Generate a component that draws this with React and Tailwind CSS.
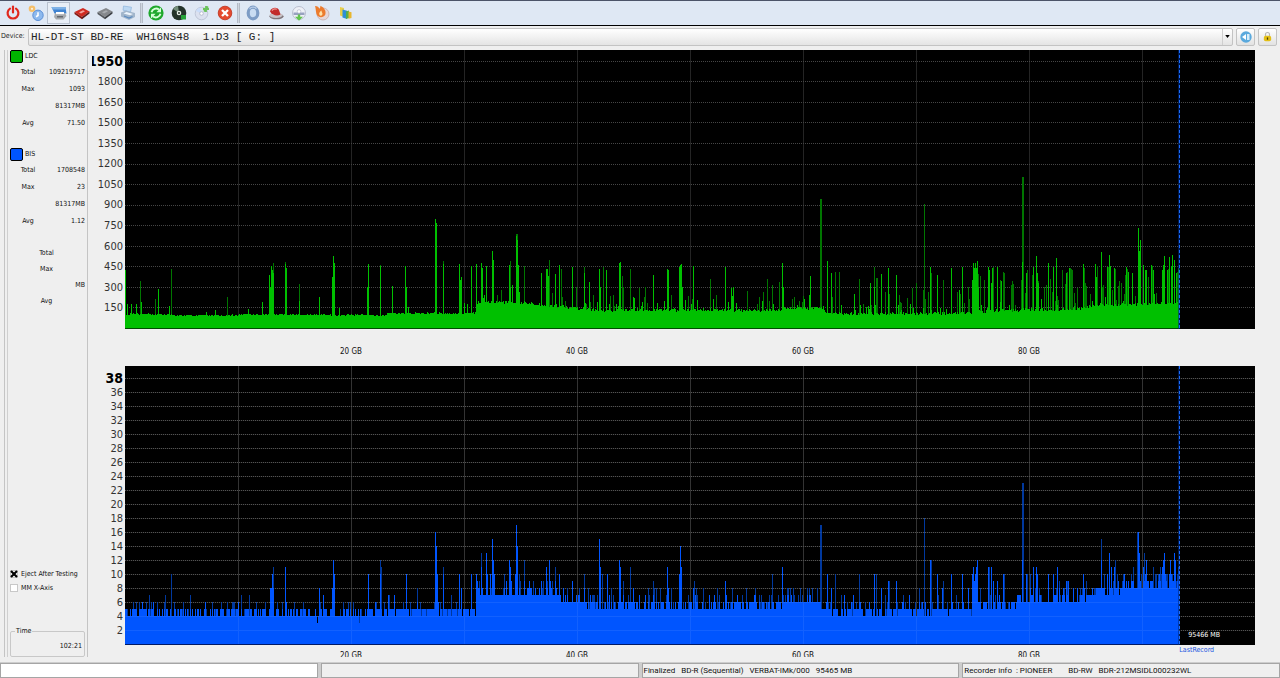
import React from 'react';

const PLOT_W = 1130;
const PLOT_H = 279;
const BASE_Y = 278;
const LAST_RECORD = 1054;

// [x, value] break points of the error floor
const LDC_FLOOR = [
  [0, 92], [6, 102], [44, 98], [50, 90], [110, 92], [120, 98], [260, 92], [262, 106], [350, 108],
  [352, 182], [400, 186], [415, 168], [440, 152], [455, 138], [480, 128], [600, 130], [618, 126], [655, 130],
  [662, 142], [698, 145], [702, 102], [800, 102], [840, 108], [870, 122], [900, 132], [930, 132],
  [955, 140], [970, 166], [1010, 168], [1054, 178],
];

const LDC_SPIKES = [
  [0, 424], [2, 173], [6, 173], [11, 173], [16, 190], [33, 282], [44, 160], [81, 120], [90, 131], [123, 139],
  [137, 192], [144, 387], [145, 300], [146, 453], [147, 420], [148, 400], [160, 470], [161, 440], [174, 200],
  [194, 224], [207, 375], [208, 528], [209, 472], [214, 144], [243, 465], [242, 300], [255, 455], [267, 309],
  [280, 453], [281, 300], [283, 150], [310, 796], [311, 764], [318, 470], [334, 467], [335, 350], [336, 375],
  [339, 180], [342, 175], [346, 455], [351, 467], [356, 477], [357, 440], [361, 453], [367, 565], [368, 500],
  [384, 460], [385, 300], [387, 314], [391, 670], [392, 640], [393, 460], [416, 399], [421, 431], [422, 430],
  [423, 380], [430, 394], [434, 460], [447, 448], [459, 400], [464, 333], [474, 431], [475, 300], [481, 423],
  [494, 472], [495, 480], [508, 229], [509, 220], [528, 387], [542, 431], [543, 420], [554, 448], [555, 460],
  [556, 465], [557, 300], [568, 453], [588, 212], [600, 443], [606, 290], [607, 230], [608, 300], [657, 477],
  [658, 300], [685, 380], [684, 240], [702, 492], [706, 399], [729, 248], [745, 326], [749, 300], [756, 394],
  [763, 436], [771, 387], [805, 448], [812, 387], [826, 436], [837, 443], [834, 277], [847, 350], [848, 472],
  [849, 440], [850, 477], [851, 440], [852, 492], [853, 300], [863, 448], [864, 420], [866, 330], [867, 440],
  [872, 448], [876, 340], [897, 485], [901, 400], [908, 448], [911, 528], [912, 400], [913, 330], [923, 472],
  [928, 448], [931, 509], [941, 400], [944, 436], [958, 467], [970, 467], [971, 375], [976, 557], [982, 448],
  [984, 533], [985, 450], [989, 440], [1001, 448], [1003, 410], [1007, 400], [1013, 728], [1014, 560],
  [1015, 643], [1018, 460], [1020, 423], [1021, 420], [1026, 460], [1028, 420], [1037, 423], [1038, 460],
  [1039, 528], [1042, 420], [1044, 516], [1046, 450], [1047, 533], [1049, 497], [1051, 400], [1053, 440],
];

const LDC_FAINT = [
  [15, 345], [30, 209], [46, 433], [102, 229], [174, 319], [148, 477], [160, 480], [255, 463], [318, 492],
  [376, 277], [385, 492], [391, 686], [392, 686], [399, 455], [424, 497], [436, 428], [451, 302], [459, 448],
  [468, 240], [478, 448], [488, 240], [497, 380], [498, 302], [505, 431], [514, 290], [520, 297], [546, 240],
  [585, 355], [634, 229], [638, 265], [642, 355], [647, 314], [654, 338], [695, 942], [696, 942], [710, 411],
  [714, 411], [734, 355], [749, 448], [751, 367], [752, 367], [760, 265], [774, 240], [782, 220], [787, 290],
  [791, 326], [799, 905], [798, 277], [806, 400], [818, 350], [843, 302], [855, 382], [868, 448], [875, 350],
  [878, 411], [879, 400], [886, 314], [897, 1100], [898, 1100], [902, 423], [907, 390], [919, 300], [937, 423],
  [942, 411], [945, 436], [947, 423], [946, 430], [959, 440], [972, 450], [983, 448], [990, 430], [996, 326],
  [1002, 430], [1027, 450], [1043, 430],
];

const BIS_FLOOR = [
  [0, 4], [352, 4], [353, 7.2], [434, 7.2], [435, 6.2], [459, 6.1], [460, 5.5], [600, 5.4], [652, 5.4],
  [653, 6], [695, 6], [699, 4.8], [740, 4.7], [815, 4.8], [850, 5.2], [888, 5.7], [900, 6.1], [955, 6.4],
  [968, 7.3], [990, 7.8], [1000, 8.2], [1054, 8.3],
];

const BIS_SPIKES = [
  [17, 6], [28, 6], [80, 6], [113, 6], [145, 8], [146, 8], [147, 10], [148, 8], [160, 11], [161, 6], [194, 8],
  [198, 7], [207, 8], [208, 12], [209, 10], [243, 10], [250, 6], [255, 10], [263, 7], [269, 7], [281, 10],
  [292, 6], [310, 16], [311, 14], [312, 10], [313, 6], [318, 10], [334, 10], [336, 8], [346, 10], [351, 10],
  [352, 9], [356, 11], [361, 13], [362, 10], [365, 10], [367, 15], [368, 12], [369, 10], [384, 12], [385, 11],
  [386, 9], [390, 10], [391, 17], [392, 14], [399, 9], [404, 9], [405, 8], [406, 8], [416, 9], [421, 11],
  [424, 12], [425, 9], [430, 9], [434, 10], [438, 8], [447, 9], [459, 8], [474, 15], [475, 11], [482, 10],
  [494, 12], [495, 11], [508, 8], [514, 7], [520, 7], [528, 7], [542, 11], [543, 8], [554, 10], [555, 14],
  [556, 11], [568, 8], [584, 7], [600, 9], [612, 7], [630, 7], [657, 11], [662, 7], [684, 7], [685, 7], [702, 10],
  [706, 8], [719, 7], [728, 7], [749, 10], [756, 8], [763, 9], [771, 9], [784, 7], [805, 12], [812, 10], [817, 8],
  [826, 10], [837, 10], [843, 8], [847, 10], [848, 11], [849, 9], [850, 10], [851, 11], [852, 12], [863, 11],
  [866, 11], [868, 9], [872, 9], [878, 10], [897, 12], [901, 10], [908, 11], [911, 11], [912, 10], [923, 10],
  [928, 10], [932, 11], [941, 9], [943, 9], [958, 10], [976, 12], [982, 10], [984, 13], [986, 11], [989, 11],
  [1001, 9], [1003, 9], [1007, 9], [1013, 16], [1014, 13], [1018, 11], [1020, 10], [1021, 12], [1027, 9],
  [1037, 11], [1038, 12], [1039, 13], [1040, 10], [1044, 10], [1045, 12], [1049, 13], [1050, 12], [1053, 11],
];

const BIS_FAINT = [
  [24, 7], [40, 7], [46, 10], [65, 7], [96, 6], [108, 6], [116, 7], [124, 7], [140, 6], [148, 11], [169, 6],
  [178, 6], [228, 6], [255, 12], [256, 11], [264, 7], [292, 8], [318, 11], [326, 7], [356, 13], [399, 12],
  [430, 11], [459, 10], [477, 10], [488, 7], [505, 11], [528, 9], [535, 8], [569, 9], [578, 8], [592, 8],
  [630, 8], [647, 10], [663, 8], [668, 8], [692, 8], [695, 17], [696, 17], [710, 10], [734, 10], [751, 10],
  [764, 9], [799, 18], [818, 9], [806, 12], [855, 8], [864, 11], [879, 10], [897, 23], [898, 23], [902, 10],
  [942, 9], [976, 15], [990, 12], [1012, 16], [1019, 13], [1028, 11], [1052, 10],
];

const LDC_TICKS = [1950, 1800, 1650, 1500, 1350, 1200, 1050, 900, 750, 600, 450, 300, 150];
const BIS_TICKS = [38, 36, 34, 32, 30, 28, 26, 24, 22, 20, 18, 16, 14, 12, 10, 8, 6, 4, 2];

function seeded(seed) {
  let s = seed;
  return () => {
    s = (s * 1664525 + 1013904223) % 4294967296;
    return s / 4294967296;
  };
}

function floorAt(points, x) {
  for (let i = 1; i < points.length; i++) {
    const [x1, v1] = points[i];
    if (x <= x1) {
      const [x0, v0] = points[i - 1];
      return v0 + ((v1 - v0) * (x - x0)) / (x1 - x0);
    }
  }
  return points[points.length - 1][1];
}

function buildLdc() {
  const rand = seeded(7);
  const solid = [];
  const faint = new Array(LAST_RECORD).fill(0);
  for (let x = 0; x < LAST_RECORD; x++) {
    let v = floorAt(LDC_FLOOR, x) + (rand() - 0.4) * (x > 350 ? 24 : 12);
    const r = rand();
    if (x > 350 && r < 0.1) v += rand() * 70;
    solid.push(v);
    if (x > 840 && rand() < 0.22) faint[x] = 180 + rand() * 230;
    else if (x > 350 && rand() < 0.09) faint[x] = 160 + rand() * 110;
  }
  LDC_SPIKES.forEach(([x, v]) => { solid[x] = Math.max(solid[x], v); });
  LDC_FAINT.forEach(([x, v]) => { faint[x] = v; });
  return { solid, faint };
}

function buildBis() {
  const rand = seeded(21);
  const solid = [];
  const faint = new Array(LAST_RECORD).fill(0);
  for (let x = 0; x < LAST_RECORD; x++) {
    const base = floorAt(BIS_FLOOR, x);
    let v = Math.floor(base + rand() * 0.99);
    if (x < 352) v = rand() < (x > 258 || (x > 8 && x < 20) ? 0.85 : 0.5) ? 5 : 4;
    else if (rand() < 0.12) v += 1;
    if (rand() < 0.012) v -= 1;
    solid.push(v);
    const r = rand();
    if (r < 0.14) faint[x] = v + 1;
    else if (x > 350 && r < 0.24) faint[x] = v + 2;
  }
  BIS_SPIKES.forEach(([x, v]) => { solid[x] = Math.max(solid[x], v); });
  BIS_FAINT.forEach(([x, v]) => { faint[x] = v; });
  return { solid, faint };
}

function toPath(values, scale) {
  return values
    .map((v, x) => (v > 0 ? `M${x} ${BASE_Y}V${Math.round(BASE_Y - v * scale)}h1V${BASE_Y}z` : ''))
    .join('');
}

const ldc = buildLdc();
const bis = buildBis();

function Plot({ data, scale, ticks, color, faintColor, edge, overlay }) {
  const lines = ticks.map((t) => Math.round(BASE_Y - t * scale) + 0.5);
  const columns = [1, 2, 3, 4, 5, 6, 7, 8, 9].map((n) => n * 113 + 0.5);
  const grid = lines.map((y) => `M0 ${y}H${PLOT_W}`).join('');
  const verticals = columns.map((x) => `M${x} 0V${PLOT_H}`).join('');
  return (
    <svg viewBox={`0 0 ${PLOT_W} ${PLOT_H}`} preserveAspectRatio="none" className="absolute inset-0 block h-full w-full bg-black" shapeRendering="crispEdges">
      <path d={verticals} stroke="#242424" />
      <path d={grid} stroke="#464646" strokeDasharray="1 1" />
      <path d={toPath(data.faint, scale)} fill={faintColor} />
      <path d={toPath(data.solid, scale)} fill={color} />
      {overlay && <path d={grid + verticals} stroke="#fff" strokeOpacity="0.07" />}
      <path d={`M0 ${PLOT_H - 0.5}H${LAST_RECORD}`} stroke={edge} />
      <path d={`M${LAST_RECORD} 0V${PLOT_H}`} stroke="#002a80" strokeWidth="2" strokeOpacity="0.6" />
      <path d={`M${LAST_RECORD + 0.5} 0V${PLOT_H}`} stroke="#1a6dff" strokeDasharray="3 2" />
    </svg>
  );
}

function YAxis({ ticks, className }) {
  return (
    <div className={`ml-1 flex w-[33px] shrink-0 flex-col overflow-hidden pr-0.5 ${className}`}>
      {ticks.map((t, i) => (
        <div key={t} className={`flex min-h-0 flex-1 items-center justify-end leading-none ${i === 0 ? 'text-[14px] font-bold text-black' : 'text-[11px] text-[#333]'}`}>
          {t}
        </div>
      ))}
    </div>
  );
}

function XAxis({ className }) {
  return (
    <div className={`ml-[37px] mr-[25px] grid shrink-0 grid-cols-10 overflow-hidden text-center text-[8px] leading-[10px] text-[#111] ${className}`}>
      <span />
      {[20, 40, 60, 80].map((gb) => (
        <span key={gb} className="col-span-2">{gb} GB</span>
      ))}
    </div>
  );
}

function Stat({ label, value }) {
  return (
    <div className="flex h-[17px] items-center">
      <span className="w-10 text-center">{label}</span>
      <span className="flex-1 text-right">{value}</span>
    </div>
  );
}

function StatGroup({ name, swatch, total, max, at, avg }) {
  return (
    <section>
      <h2 className="flex h-3 items-center gap-0.5 pl-0.5">
        <span className={`h-[13px] w-[13px] rounded-[2px] border border-black ${swatch}`} />
        {name}
      </h2>
      <div className="mt-0.5">
        <Stat label="Total" value={total} />
        <Stat label="Max" value={max} />
        <Stat label="" value={at} />
        <Stat label="Avg" value={avg} />
      </div>
    </section>
  );
}

function Check({ label, checked }) {
  return (
    <label className="flex h-[14px] items-center gap-[3px] pl-0.5">
      <span className="relative flex h-2 w-2">
        <input type="checkbox" defaultChecked={checked} className="peer h-2 w-2 appearance-none border border-[#c8c8c8] bg-white" />
        <svg viewBox="0 0 8 8" className="pointer-events-none absolute inset-0 hidden h-2 w-2 peer-checked:block">
          <path d="M1 1l6 6M7 1L1 7" stroke="#000" strokeWidth="2.2" />
        </svg>
      </span>
      {label}
    </label>
  );
}

const TOOLS = [
  {
    name: 'Exit',
    art: (
      <>
        <path d="M5 3.6a5.4 5.4 0 1 0 6 0" fill="none" stroke="#e0281e" strokeWidth="2.2" strokeLinecap="round" />
        <path d="M8 1.5v6" stroke="#e0281e" strokeWidth="2.2" strokeLinecap="round" />
      </>
    ),
  },
  {
    name: 'Settings',
    art: (
      <>
        <circle cx="4" cy="3.8" r="3.3" fill="#f5bf6a" />
        <circle cx="4" cy="3.8" r="1.1" fill="#fff3dc" />
        <circle cx="10" cy="10.3" r="5.2" fill="#8db9ee" stroke="#5b8fd6" />
        <path d="M10 7.2v3.3l-2 1.2" fill="none" stroke="#fff" strokeWidth="1.6" />
      </>
    ),
  },
  {
    name: 'Disc quality',
    pressed: true,
    art: (
      <>
        <path d="M.5 2h14l1 6.500h-12z" fill="#3f83d2" />
        <path d="M.5 2h14l.4 2.500H1.500z" fill="#7fb2e6" />
        <path d="M4 8h10l1.500 3-3 3.500H5l-2-2.500z" fill="#a5a9ae" />
        <path d="M5 7h8v2.200H5z" fill="#fff" />
        <path d="M6 11h6v1.500H6z" fill="#62676e" />
      </>
    ),
  },
  {
    name: 'Book red',
    art: (
      <>
        <path d="M.5 7L9 3l6.500 3.500-7.500 5.500z" fill="#cf2a20" />
        <path d="M.5 7L8 12v2.200L.5 9z" fill="#861610" />
        <path d="M8 12l7.500-5.500v2L8 14.200z" fill="#5a1b18" />
        <path d="M5 7.200l4-1.900 2 1-4 2.200z" fill="#f3a39c" />
      </>
    ),
  },
  {
    name: 'Book grey',
    art: (
      <>
        <path d="M.5 7L9 3l6.500 3.500-7.500 5.500z" fill="#85888c" />
        <path d="M.5 7L8 12v2.200L.5 9z" fill="#55585c" />
        <path d="M8 12l7.500-5.500v2L8 14.200z" fill="#3b3e42" />
        <path d="M5 7.200l4-1.900 2 1-4 2.200z" fill="#a9acb0" />
      </>
    ),
  },
  {
    name: 'Print',
    art: (
      <>
        <path d="M3.500 1l8 1.200-1 5-7.500-2z" fill="#bcd8f3" stroke="#83add6" strokeWidth=".6" />
        <path d="M1 7.500L6 5.500l9 2.500v4L9 15l-8-3.600z" fill="#a2b6cb" />
        <path d="M3.500 8.400l3-1.300 6.500 1.800-3 1.300z" fill="#edf5fd" />
        <path d="M4 11l5 2 3.500-1.500" fill="none" stroke="#5b8cc2" strokeWidth="1.3" />
      </>
    ),
  },
  {
    name: 'Refresh',
    split: true,
    art: (
      <>
        <circle cx="8" cy="8" r="7.6" fill="#1fa82c" />
        <path d="M3.5 7.2A4.8 4.8 0 0 1 11 4.5M12.5 8.8A4.8 4.8 0 0 1 5 11.5" fill="none" stroke="#d8ffd9" strokeWidth="1.9" />
        <path d="M13 2.5v4.8H8.4zM3 13.5V8.7h4.6z" fill="#d8ffd9" />
      </>
    ),
  },
  {
    name: 'Read disc',
    art: (
      <>
        <circle cx="8" cy="8" r="7.3" fill="#23332a" />
        <path d="M8 8L2 4a7.2 7.2 0 0 1 5-3.2z" fill="#738d7b" />
        <circle cx="8" cy="8" r="2.3" fill="#e4ece5" />
        <circle cx="8" cy="8" r="1" fill="#23332a" />
        <path d="M10 10h5v4.5h-5z" fill="#24a338" />
      </>
    ),
  },
  {
    name: 'Add disc',
    art: (
      <>
        <circle cx="7.5" cy="8.5" r="6.3" fill="#dbe1ef" stroke="#b7bfd0" strokeWidth=".8" />
        <path d="M7.5 8.5L2 6a6 6 0 0 1 4-3.4z" fill="#c9ddfb" />
        <circle cx="7.5" cy="8.5" r="1.8" fill="#fff" stroke="#a7afc0" strokeWidth=".7" />
        <path d="M12 1v6M9 4h6M10 6.5l4-5" stroke="#6bc35c" strokeWidth="1.8" />
      </>
    ),
  },
  {
    name: 'Stop',
    art: (
      <>
        <circle cx="8" cy="8" r="6.8" fill="#e4492e" stroke="#bd2e19" strokeWidth=".8" />
        <path d="M5 5l6 6M11 5l-6 6" stroke="#fff" strokeWidth="2.3" />
      </>
    ),
  },
  {
    name: 'Disc info',
    split: true,
    art: (
      <>
        <ellipse cx="8" cy="8" rx="4.8" ry="5.800" fill="#c9dcf2" stroke="#7d9cc5" strokeWidth="3.2" />
        <path d="M4.500 3.600a5.400 5.400 0 0 1 7 0" fill="none" stroke="#b9cde7" strokeWidth="1.4" />
      </>
    ),
  },
  {
    name: 'Burn',
    art: (
      <>
        <ellipse cx="8.5" cy="11.3" rx="7" ry="3" fill="#7e7479" />
        <ellipse cx="8" cy="10.3" rx="6.5" ry="2.6" fill="#c8c3c7" />
        <path d="M2 6.5C3 2.5 9 1.5 11 5l1.5 4.5C9 11.5 4 10 2 6.5z" fill="#c22b2a" />
        <path d="M4 5.6c1.3-1.8 3.2-2 4.8-1.3" fill="none" stroke="#f09c97" strokeWidth="1.2" />
      </>
    ),
  },
  {
    name: 'Save image',
    art: (
      <>
        <circle cx="8" cy="8" r="6.5" fill="#eef0f7" stroke="#b4b9c9" strokeWidth=".9" />
        <path d="M2.500 7.500h11v2.500h-11z" fill="#98a1c0" />
        <circle cx="8" cy="6.5" r="1.8" fill="#fff" stroke="#a9b0c4" strokeWidth=".6" />
        <path d="M6.8 9.500h2.4v2.300H12L8 15.8l-4-4h2.8z" fill="#63c44e" />
      </>
    ),
  },
  {
    name: 'Erase',
    art: (
      <>
        <circle cx="9" cy="9" r="6" fill="#e6d6d6" stroke="#c4abab" strokeWidth=".8" />
        <path d="M1 1c2.500 0 3.800 1.300 4.500 2.800C6.300 2.800 6.500 2 6.300.8 10 2.500 12.500 6 11.300 9.500c-1.500 3.200-5.800 3.500-7.800 1.300C1.500 8.500 2.200 4.500 1 1z" fill="#ec7b2d" />
        <path d="M5.500 10c-1-2 .5-3.500 2-4.500 0 2 1.500 2.500.8 4.200-.6 1.200-2.200 1.400-2.800.3z" fill="#ffe1a6" />
      </>
    ),
  },
  {
    name: 'Statistics',
    art: (
      <>
        <path d="M3 2l4 1v9l-4-1.500z" fill="#e9cf4a" />
        <path d="M5.500 4.500L10 5.700V14l-4.500-1.500z" fill="#2f8fd6" />
        <path d="M9 6.500l3-1v7.500l-3 1z" fill="#58ae4b" />
        <path d="M11.500 6.500l3 .8V13l-3 .8z" fill="#e8b62d" />
      </>
    ),
  },
];

function Toolbar() {
  return (
    <header className="flex h-[26px] shrink-0 items-center border-t border-b border-t-[#4c5468] border-b-black bg-[#dfe8f4] pl-px">
      {TOOLS.map((tool) => (
        <React.Fragment key={tool.name}>
          {tool.split && <span className="mx-px h-5 w-[3px] border-x border-x-[#b4bbc6] bg-[#cfd6e0]" />}
          <button
            type="button"
            aria-label={tool.name}
            className={`flex h-[22px] w-[23px] items-center justify-center ${tool.pressed ? 'border border-[#b9c2cf] bg-[#e8eef6]' : ''}`}
          >
            <svg viewBox="0 0 16 16" className="h-4 w-4 shrink-0">{tool.art}</svg>
          </button>
        </React.Fragment>
      ))}
    </header>
  );
}

function DeviceBar() {
  const button = 'flex h-[18px] w-[19px] items-center justify-center rounded-[2px] border border-[#c3c3c3] bg-gradient-to-b from-white to-[#e2e2e2]';
  return (
    <div className="flex h-[21px] shrink-0 items-center gap-[3px] pl-px pr-[3px]">
      <label htmlFor="device" className="-mr-0.5 w-[26px] text-[7px]">Device:</label>
      <div className="relative flex-1">
        <select
          id="device"
          className="block h-[18px] w-full appearance-none whitespace-pre rounded-[2px] border border-[#c3c3c3] bg-gradient-to-b from-white to-[#e4e4e4] pl-0.5 font-['Liberation_Mono',monospace] text-[11px] text-[#222]"
        >
          <option>{'HL-DT-ST\u00a0BD-RE\u00a0\u00a0WH16NS48\u00a0\u00a01.D3\u00a0[\u00a0G:\u00a0]'}</option>
        </select>
        <span className="pointer-events-none absolute inset-y-px right-px flex w-[10px] items-center justify-center border-l border-[#cfcfcf]">
          <svg viewBox="0 0 6 4" className="h-[3px] w-[5px]"><path d="M0 0h6L3 4z" fill="#000" /></svg>
        </span>
      </div>
      <button type="button" aria-label="Eject" className={button}>
        <svg viewBox="0 0 12 12" className="h-3 w-3">
          <circle cx="6" cy="6" r="5.7" fill="#5aa9dd" />
          <path d="M2 6l4-3v6z" fill="#fff" />
          <path d="M7 3h2.5v6H7z" fill="#d7edfa" />
        </svg>
      </button>
      <button type="button" aria-label="Lock" className={button}>
        <svg viewBox="0 0 12 12" className="h-[11px] w-[11px]">
          <path d="M3.8 6V3.8a2.2 2.2 0 0 1 4.4 0V6" fill="none" stroke="#b5b5b5" strokeWidth="1.2" />
          <rect x="2" y="5.3" width="8" height="6" rx="2" fill="#e3bf16" />
          <path d="M6 7v2.5" stroke="#4d3d00" strokeWidth="1.4" />
        </svg>
      </button>
    </div>
  );
}

function Sidebar() {
  return (
    <aside className="ml-1 flex w-[84px] shrink-0 border-x border-[#c4c4c4] text-[7px] leading-none text-[#111]">
      <div className="ml-0.5 flex flex-1 flex-col border-l border-[#cfcfcf] pr-0.5">
        <StatGroup name="LDC" swatch="bg-[#00b400]" total="109219717" max="1093" at="81317MB" avg="71.50" />
        <div className="mt-4">
          <StatGroup name="BIS" swatch="bg-[#0055ff]" total="1708548" max="23" at="81317MB" avg="1.12" />
        </div>
        <div className="mt-[15px] text-center">
          <div className="flex h-4 items-center justify-center">Total</div>
          <div className="flex h-4 items-center justify-center">Max</div>
          <div className="flex h-4 items-center justify-end">MB</div>
          <div className="flex h-4 items-center justify-center">Avg</div>
        </div>
        <div className="mt-auto">
          <Check label="Eject After Testing" checked />
          <Check label="MM X-Axis" />
        </div>
        <fieldset className="ml-0.5 mt-[33px] h-[29px] rounded-[2px] border border-[#c8c8c8] px-0.5">
          <legend className="ml-0.5 px-px">Time</legend>
          <div className="pt-2 text-right">102:21</div>
        </fieldset>
      </div>
    </aside>
  );
}

function StatusBar() {
  const cell = 'h-[15px] overflow-hidden whitespace-pre border border-[#a5a5a5] pl-px leading-[13px]';
  return (
    <footer className="mt-[5px] grid h-4 shrink-0 grid-cols-4 gap-x-[3px] bg-[#cdcdcd] pt-px font-['Roboto','Noto_Sans',sans-serif] text-[8px] text-[#111]">
      <div className={`${cell} bg-white`} />
      <div className={`${cell} bg-[#efefef]`} />
      <div className={`${cell} bg-[#efefef]`}>{'Finalized   BD-R (Sequential)   VERBAT-IMk/000   95465 MB'}</div>
      <div className={`${cell} bg-[#efefef]`}>{'Recorder info  : PIONEER        BD-RW   BDR-212MSIDL000232WL'}</div>
    </footer>
  );
}

export default function App() {
  return (
    <div className="flex h-screen min-h-[480px] flex-col overflow-hidden bg-[#efefef] font-['DejaVu_Sans_Condensed','DejaVu_Sans',sans-serif] text-[#222]">
      <Toolbar />
      <DeviceBar />
      <main className="flex min-h-0 flex-1 pt-[3px]">
        <Sidebar />
        <div className="flex min-w-0 flex-1 flex-col">
          <div className="flex min-h-0 flex-1">
            <YAxis ticks={LDC_TICKS} className="pt-px pb-[11px]" />
            <div className="relative mr-[25px] flex-1">
              <Plot data={ldc} scale={0.137} ticks={LDC_TICKS} color="#00c000" faintColor="#007600" edge="#004d00" />
            </div>
          </div>
          <XAxis className="h-[37px] pt-[18px]" />
          <div className="flex min-h-0 flex-1">
            <YAxis ticks={BIS_TICKS} className="pt-[5px] pb-2" />
            <div className="relative mr-[25px] flex-1">
              <Plot data={bis} scale={7} ticks={BIS_TICKS} color="#0055ff" faintColor="#00389e" edge="#001a66" overlay />
              <div className="absolute bottom-0 left-[93.3%] text-[7px] leading-none">
                <div className="mb-1.5 ml-[9px] whitespace-nowrap text-white">95466 MB</div>
                <div className="absolute left-0 top-full mt-0.5 text-[#1a55e0]">LastRecord</div>
              </div>
            </div>
          </div>
          <XAxis className="h-3 pt-1.5" />
        </div>
      </main>
      <StatusBar />
    </div>
  );
}
